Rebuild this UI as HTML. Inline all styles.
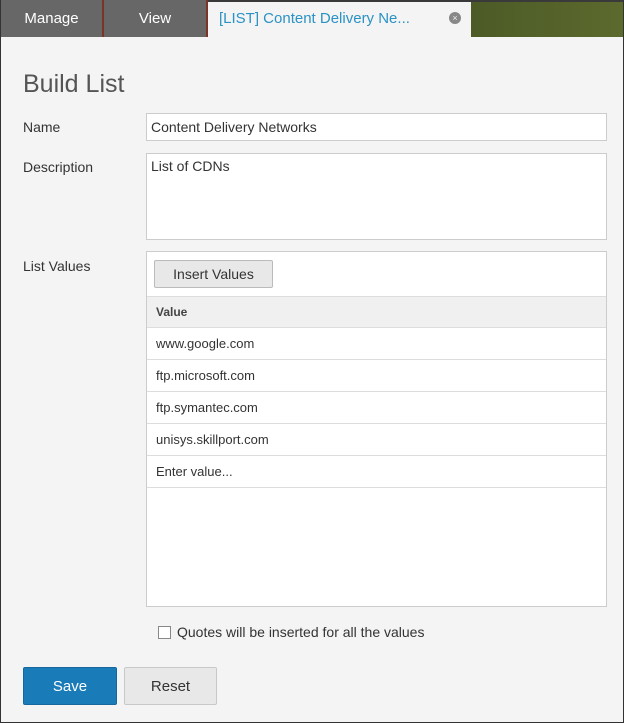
<!DOCTYPE html>
<html><head><style>
*{box-sizing:border-box;margin:0;padding:0}
body{width:624px;height:723px;font-family:"Liberation Sans",sans-serif;background:#f4f4f4;position:relative;overflow:hidden;color:#333}
.a{position:absolute}
.frame{left:0;top:0;width:624px;height:723px;border:1px solid #333;border-top:none}
.tab{top:0;height:37px;background:#676767;color:#fff;font-size:15px;line-height:37px;text-align:center}
.lbl{font-size:14px;color:#333;left:23px}
.box{background:#fff;border:1px solid #ccc}
.row{left:0;right:0;height:32px;border-bottom:1px solid #ddd;font-size:13px;line-height:31px;padding-left:9px;color:#333}
.btn{height:38px;font-size:15px;line-height:38px;text-align:center;border-radius:2px}
</style></head><body>
<div class="a" style="left:0;top:0;width:624px;height:37px;background:#3a3a3a"></div>
<div class="a tab" style="left:1px;width:101px">Manage</div>
<div class="a" style="left:102px;top:0;width:2px;height:37px;background:#7a3428"></div>
<div class="a tab" style="left:104px;width:102px">View</div>
<div class="a" style="left:206px;top:0;width:2px;height:37px;background:#7a3428"></div>
<div class="a" style="left:208px;top:2px;width:263px;height:35px;background:#f4f4f4;color:#2a92c4;font-size:15px;line-height:34px;padding-left:11px">[LIST] Content Delivery Ne...</div>
<div class="a" style="left:449px;top:12px;width:12px;height:12px;border-radius:50%;background:#888;color:#eee;font-size:9px;line-height:12px;text-align:center">×</div>
<div class="a" style="left:471px;top:2px;width:153px;height:35px;background:linear-gradient(90deg,#4c5a26,#5c6a2e)"></div>
<div class="a frame"></div>
<div class="a" style="left:23px;top:70px;font-size:25px;color:#555">Build List</div>
<div class="a lbl" style="top:119px">Name</div>
<div class="a box" style="left:146px;top:113px;width:461px;height:28px;font-size:14px;line-height:26px;padding-left:4px">Content Delivery Networks</div>
<div class="a lbl" style="top:159px">Description</div>
<div class="a box" style="left:146px;top:153px;width:461px;height:87px;font-size:14px;padding:4px">List of CDNs</div>
<div class="a lbl" style="top:258px">List Values</div>
<div class="a box" style="left:146px;top:251px;width:461px;height:356px">
 <div class="a btn" style="left:7px;top:8px;width:119px;height:28px;line-height:26px;background:#e8e8e8;border:1px solid #bbb;font-size:14px">Insert Values</div>
 <div class="a row" style="top:44px;background:#f0f0f0;border-top:1px solid #ddd;font-size:12px;font-weight:bold;color:#444">Value</div>
 <div class="a row" style="top:76px">www.google.com</div>
 <div class="a row" style="top:108px">ftp.microsoft.com</div>
 <div class="a row" style="top:140px">ftp.symantec.com</div>
 <div class="a row" style="top:172px">unisys.skillport.com</div>
 <div class="a row" style="top:204px">Enter value...</div>
</div>
<div class="a" style="left:158px;top:626px;width:13px;height:13px;border:1px solid #888;background:#fff"></div>
<div class="a" style="left:177px;top:624px;font-size:14px;color:#333">Quotes will be inserted for all the values</div>
<div class="a btn" style="left:23px;top:667px;width:94px;background:#1a7bb9;border:1px solid #15689e;color:#fff">Save</div>
<div class="a btn" style="left:124px;top:667px;width:93px;background:#e8e8e8;border:1px solid #c8c8c8;color:#333">Reset</div>
</body></html>
